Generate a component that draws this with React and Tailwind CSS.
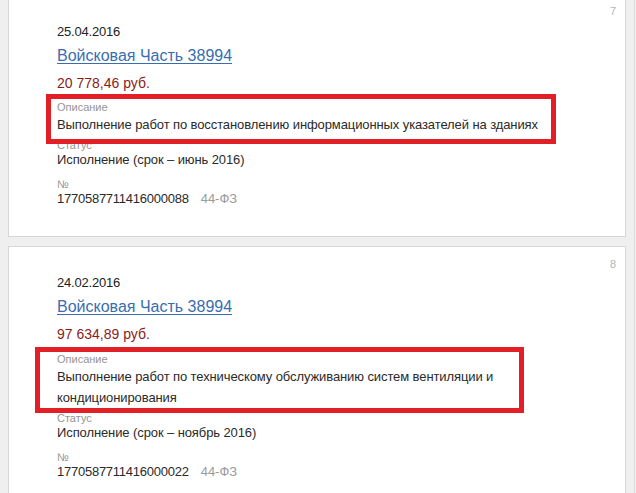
import React from "react";

function Card({ num, date, amount, desc, status, reg, cardCls, boxCls, lblCls }) {
  return (
    <div className={"relative bg-white border border-[#d6d6d6] pl-[48px] " + cardCls}>
      <div className="absolute right-[9px] top-[11px] text-[11px] leading-[12px] text-[#b4b4b4]">{num}</div>
      <div className="text-[13px] leading-[20px] tracking-[-0.2px] text-[#222]">{date}</div>
      <div className="mt-[2px] text-[16px] leading-[24px]">
        <a href="#" className="text-[#3a6daf] underline underline-offset-[2px] decoration-1">Войсковая Часть 38994</a>
      </div>
      <div className="mt-[5px] text-[14px] leading-[20px] text-[#8a1c1c]">{amount}</div>
      <div className={"text-[11px] leading-[12px] text-[#959595] " + lblCls}>Описание</div>
      <div className="mt-[1px] max-w-[500px] text-[13px] leading-[21px] tracking-[-0.1px] text-[#2a2a2a]">{desc}</div>
      <div className="mt-[4px] text-[11px] leading-[12px] text-[#959595]">Статус</div>
      <div className="mt-[1px] text-[13px] leading-[16px] tracking-[-0.1px] text-[#2a2a2a]">{status}</div>
      <div className="mt-[10px] text-[11px] leading-[12px] text-[#959595]">№</div>
      <div className="mt-[1px] flex text-[13px] leading-[16px]">
        <span className="tracking-[-0.25px] text-[#2a2a2a]">{reg}</span>
        <span className="ml-[12px] text-[#9a9a9a]">44-ФЗ</span>
      </div>
      <div className={"pointer-events-none absolute border-[5px] border-[#e21f27] " + boxCls}></div>
    </div>
  );
}

export default function App() {
  return (
    <div
      className="relative min-h-[493px] overflow-hidden bg-[#efefef] pl-[8px] pr-[10px]"
      style={{ fontFamily: '"Liberation Sans", Arial, sans-serif' }}
    >
      <div className="absolute right-[1px] top-0 h-full w-px bg-[#dcdcdc]"></div>
      <div className="flex flex-col gap-[9px] -mt-[7px]">
        <Card
          num="7"
          date="25.04.2016"
          amount="20 778,46 руб."
          desc="Выполнение работ по восстановлению информационных указателей на зданиях"
          status="Исполнение (срок – июнь 2016)"
          reg="1770587711416000088"
          cardCls="h-[244px] pt-[28px]"
          lblCls="mt-[8px]"
          boxCls="left-[37px] top-[100px] w-[510px] h-[50px]"
        />
        <Card
          num="8"
          date="24.02.2016"
          amount="97 634,89 руб."
          desc="Выполнение работ по техническому обслуживанию систем вентиляции и кондиционирования"
          status="Исполнение (срок – ноябрь 2016)"
          reg="1770587711416000022"
          cardCls="h-[260px] pt-[26px]"
          lblCls="mt-[9px]"
          boxCls="left-[26px] top-[100px] w-[489px] h-[66px]"
        />
      </div>
    </div>
  );
}
